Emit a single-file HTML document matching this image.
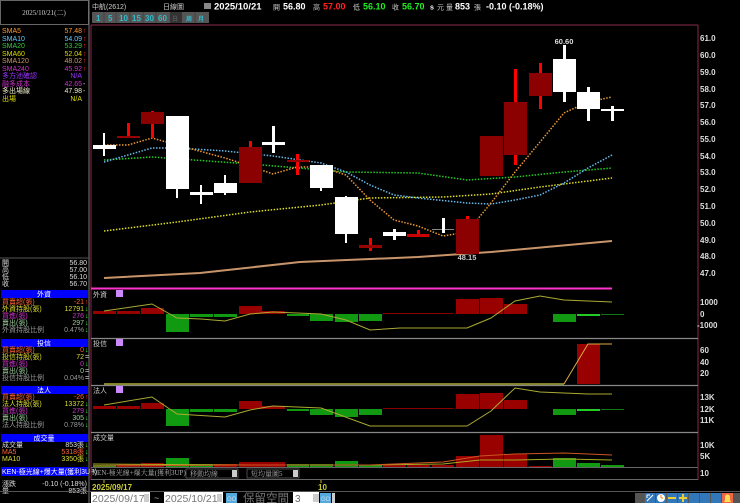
<!DOCTYPE html>
<html><head><meta charset="utf-8"><style>
html,body{margin:0;padding:0;background:#000;width:740px;height:503px;overflow:hidden}
svg{display:block}
text{font-family:"Liberation Sans","Noto Sans CJK TC",sans-serif}
.s{font-family:"Liberation Serif","Noto Serif CJK SC",serif;font-size:7px}
.ax{font-family:"Liberation Sans",sans-serif;font-size:8px;font-weight:bold;fill:#ddd}
</style></head><body>
<svg width="740" height="503" viewBox="0 0 740 503" xmlns="http://www.w3.org/2000/svg">
<rect width="740" height="503" fill="#000"/>
<!-- left panel -->
<rect x="0.5" y="0.5" width="88" height="24" fill="none" stroke="#666"/>
<text x="44" y="15" class="s" fill="#ccc" text-anchor="middle">2025/10/21(二)</text>
<line x1="89" y1="0" x2="89" y2="503" stroke="#777"/>
<g class="s">
<text x="2" y="33" fill="#ff9933">SMA5</text><text x="82" y="33" fill="#ff9933" text-anchor="end">57.48</text>
<text x="2" y="41" fill="#66ccff">SMA10</text><text x="82" y="41" fill="#66ccff" text-anchor="end">54.09</text>
<text x="2" y="48" fill="#33cc33">SMA20</text><text x="82" y="48" fill="#33cc33" text-anchor="end">53.29</text>
<text x="2" y="56" fill="#dddd00">SMA60</text><text x="82" y="56" fill="#dddd00" text-anchor="end">52.04</text>
<text x="2" y="63" fill="#cc9966">SMA120</text><text x="82" y="63" fill="#cc9966" text-anchor="end">48.02</text>
<text x="2" y="71" fill="#cc33cc">SMA240</text><text x="82" y="71" fill="#cc33cc" text-anchor="end">45.92</text>
<text x="2" y="78" fill="#9933ff">多方池確認</text><text x="82" y="78" fill="#9933ff" text-anchor="end">N/A</text>
<text x="2" y="86" fill="#cc33cc">融多成本</text><text x="82" y="86" fill="#cc33cc" text-anchor="end">42.65</text>
<text x="2" y="93" fill="#eeeecc">多出場線</text><text x="82" y="93" fill="#eeeecc" text-anchor="end">47.98</text>
<text x="2" y="101" fill="#dddd00">出場</text><text x="82" y="101" fill="#dddd00" text-anchor="end">N/A</text>
</g>
<g fill="#ff2222" font-size="7"><text x="83" y="33">↑</text><text x="83" y="41">↑</text><text x="83" y="48">↑</text><text x="83" y="56">↑</text><text x="83" y="63">↑</text><text x="83" y="71">↑</text></g>
<g fill="#ddd" font-size="7"><text x="83" y="86">-</text><text x="83" y="93">-</text></g>
<line x1="0" y1="258" x2="89" y2="258" stroke="#555"/>
<g class="s" fill="#ddd">
<text x="2" y="265">開</text><text x="87" y="265" text-anchor="end">56.80</text>
<text x="2" y="272">高</text><text x="87" y="272" text-anchor="end">57.00</text>
<text x="2" y="279">低</text><text x="87" y="279" text-anchor="end">56.10</text>
<text x="2" y="286">收</text><text x="87" y="286" text-anchor="end">56.70</text>
</g>
<!-- section boxes -->
<g class="s">
<rect x="1" y="290" width="87" height="8" fill="#0000ff"/><text x="44" y="296.5" fill="#fff" text-anchor="middle">外資</text>
<text x="2" y="304" fill="#ff6633">買賣超(張)</text><text x="84" y="304" fill="#ff6633" text-anchor="end">-21</text>
<text x="2" y="311" fill="#dddd33">外資持股(張)</text><text x="84" y="311" fill="#dddd33" text-anchor="end">12791</text>
<text x="2" y="318" fill="#cc33cc">買進(張)</text><text x="84" y="318" fill="#cc33cc" text-anchor="end">276</text>
<text x="2" y="325" fill="#99cc99">賣出(張)</text><text x="84" y="325" fill="#99cc99" text-anchor="end">297</text>
<text x="2" y="332" fill="#999">外資持股比例</text><text x="84" y="332" fill="#999" text-anchor="end">0.47%</text>
<rect x="1" y="339" width="87" height="8" fill="#0000ff"/><text x="44" y="345.5" fill="#fff" text-anchor="middle">投信</text>
<text x="2" y="352" fill="#ff6633">買賣超(張)</text><text x="84" y="352" fill="#ff6633" text-anchor="end">0</text>
<text x="2" y="359" fill="#dddd33">投信持股(張)</text><text x="84" y="359" fill="#dddd33" text-anchor="end">72</text>
<text x="2" y="366" fill="#cc33cc">買進(張)</text><text x="84" y="366" fill="#cc33cc" text-anchor="end">0</text>
<text x="2" y="373" fill="#99cc99">賣出(張)</text><text x="84" y="373" fill="#99cc99" text-anchor="end">0</text>
<text x="2" y="380" fill="#999">投信持股比例</text><text x="84" y="380" fill="#999" text-anchor="end">0.04%</text>
<rect x="1" y="386" width="87" height="8" fill="#0000ff"/><text x="44" y="392.5" fill="#fff" text-anchor="middle">法人</text>
<text x="2" y="399" fill="#ff6633">買賣超(張)</text><text x="84" y="399" fill="#ff6633" text-anchor="end">-26</text>
<text x="2" y="406" fill="#dddd33">法人持股(張)</text><text x="84" y="406" fill="#dddd33" text-anchor="end">13372</text>
<text x="2" y="413" fill="#cc33cc">買進(張)</text><text x="84" y="413" fill="#cc33cc" text-anchor="end">279</text>
<text x="2" y="420" fill="#99cc99">賣出(張)</text><text x="84" y="420" fill="#99cc99" text-anchor="end">305</text>
<text x="2" y="427" fill="#999">法人持股比例</text><text x="84" y="427" fill="#999" text-anchor="end">0.78%</text>
<rect x="1" y="434" width="87" height="8" fill="#0000ff"/><text x="44" y="440.5" fill="#fff" text-anchor="middle">成交量</text>
<text x="2" y="447" fill="#ddd">成交量</text><text x="84" y="447" fill="#ddd" text-anchor="end">853張</text>
<text x="2" y="454" fill="#ff6633">MA5</text><text x="84" y="454" fill="#ff6633" text-anchor="end">5318張</text>
<text x="2" y="461" fill="#dddd33">MA10</text><text x="84" y="461" fill="#dddd33" text-anchor="end">3350張</text>
<rect x="1" y="467" width="87" height="9" fill="#0000ff"/><text x="2" y="474" fill="#fff">KEN-極光線+爆大量(獲利3UP)</text>
<text x="2" y="486" fill="#ddd">漲跌</text><text x="87" y="486" fill="#ddd" text-anchor="end">-0.10 (-0.18%)</text>
<text x="2" y="493" fill="#ddd">量</text><text x="87" y="493" fill="#ddd" text-anchor="end">853張</text>
</g>
<g font-size="7" fill="#33ee33"><text x="85" y="311">↓</text><text x="85" y="318">↓</text><text x="85" y="325">↓</text><text x="85" y="332">↓</text><text x="85" y="352">↓</text><text x="85" y="366">↓</text><text x="85" y="406">↓</text><text x="85" y="413">↓</text><text x="85" y="420">↓</text><text x="85" y="427">↓</text><text x="85" y="447">↓</text><text x="85" y="454">↓</text><text x="85" y="461">↓</text></g>
<g font-size="7" fill="#ff2222"><text x="85" y="304">↑</text><text x="85" y="399">↑</text></g>
<g font-size="7" fill="#ddd"><text x="85" y="359">=</text><text x="85" y="373">=</text><text x="85" y="380">=</text></g>

<!-- header -->
<g class="s" fill="#ccc"><text x="92" y="9">中航(2612)</text><text x="163" y="9">日線圖</text></g>
<rect x="204" y="3" width="7" height="6" fill="#888"/>
<text x="214" y="9.5" font-size="9.5" font-weight="bold" fill="#fff" font-family="Liberation Sans">2025/10/21</text>
<g font-size="9" font-weight="bold" font-family="Liberation Sans,Noto Sans CJK TC">
<text x="273" y="9.5" fill="#ccc" font-size="7" font-weight="normal">開</text><text x="283" y="9.5" fill="#fff">56.80</text>
<text x="313" y="9.5" fill="#ccc" font-size="7" font-weight="normal">高</text><text x="323" y="9.5" fill="#ff2222">57.00</text>
<text x="353" y="9.5" fill="#ccc" font-size="7" font-weight="normal">低</text><text x="363" y="9.5" fill="#22ee22">56.10</text>
<text x="392" y="9.5" fill="#ccc" font-size="7" font-weight="normal">收</text><text x="402" y="9.5" fill="#22ee22">56.70</text>
<text x="430" y="9.5" fill="#fff" font-size="7">s</text><text x="437" y="9.5" fill="#ccc" font-size="7" font-weight="normal">元 量</text><text x="455" y="9.5" fill="#fff">853</text><text x="474" y="9.5" fill="#ccc" font-size="7" font-weight="normal">張</text>
<text x="486" y="9.5" fill="#fff">-0.10 (-0.18%)</text>
</g>
<rect x="92" y="12" width="117" height="11" fill="#555"/>
<rect x="170" y="12" width="12" height="11" fill="#333"/>
<g font-size="8" font-weight="bold" fill="#33bbcc" font-family="Liberation Sans,Noto Sans CJK TC">
<text x="96" y="21">1</text><text x="108" y="21">5</text><text x="119" y="21">10</text><text x="132" y="21">15</text><text x="145" y="21">30</text><text x="158" y="21">60</text><text x="172" y="21" fill="#555" font-size="6">日</text><text x="186" y="21" font-size="6">周</text><text x="198" y="21" font-size="6">月</text>
</g>
<g stroke="#444"><line x1="104" y1="12" x2="104" y2="23"/><line x1="116" y1="12" x2="116" y2="23"/><line x1="130" y1="12" x2="130" y2="23"/><line x1="143" y1="12" x2="143" y2="23"/><line x1="156" y1="12" x2="156" y2="23"/><line x1="195" y1="12" x2="195" y2="23"/></g>

<!-- chart frame -->
<line x1="91" y1="25" x2="698" y2="25" stroke="#8a2a4a"/>
<line x1="698" y1="25" x2="698" y2="480" stroke="#8a2a4a"/>
<line x1="91" y1="25" x2="91" y2="480" stroke="#8a2a4a"/>
<!-- y axis -->
<g class="ax" font-size="7.5">
<text x="700" y="41">61.0</text><text x="700" y="58">60.0</text><text x="700" y="75">59.0</text><text x="700" y="92">58.0</text><text x="700" y="108">57.0</text><text x="700" y="125">56.0</text><text x="700" y="142">55.0</text><text x="700" y="159">54.0</text><text x="700" y="175">53.0</text><text x="700" y="192">52.0</text><text x="700" y="209">51.0</text><text x="700" y="226">50.0</text><text x="700" y="243">49.0</text><text x="700" y="259">48.0</text><text x="700" y="276">47.0</text>
<text x="700" y="305">1000</text><text x="700" y="317">0</text><text x="697" y="328">-1000</text>
<text x="700" y="353">60</text><text x="700" y="365">40</text><text x="700" y="376">20</text>
<text x="700" y="400">13K</text><text x="700" y="412">12K</text><text x="700" y="423">11K</text>
<text x="700" y="448">10K</text><text x="700" y="459">5K</text><text x="700" y="476">10</text>
</g>

<!-- MA lines -->
<polyline fill="none" stroke="#c8956a" stroke-width="2" points="104,278 200,273 300,262 418,257 491,252 612,241"/>
<g fill="none" stroke-width="1.5" stroke-dasharray="1.5,1.5">
<polyline stroke="#dddd22" points="104,231 177,222 250,212 321,205 370,198 443,197 491,194 540,187 612,178"/>
<polyline stroke="#22cc22" points="104,160 152,157 250,164 346,172 418,173 467,180 515,177 564,172 612,168"/>
<polyline stroke="#66bbee" points="104,162 152,148 177,148 225,151 273,156 321,163 346,172 370,185 394,195 418,198 467,203 491,204 515,200 540,195 564,183 588,168 612,155"/>
<polyline stroke="#ee9933" points="104,145 128,145 152,138 177,145 225,158 250,166 273,174 297,167 321,167 346,175 370,200 394,220 418,226 443,236 467,232 491,203 515,172 540,142 564,113 588,102 612,97"/>
</g>

<!-- candles -->
<g>
<!-- 1 white cross -->
<rect x="103" y="133" width="2" height="23" fill="#fff"/><rect x="93" y="145" width="23" height="4" fill="#fff"/>
<!-- 2 red -->
<rect x="127" y="123" width="3" height="14" fill="#ff0000"/><rect x="117" y="136" width="23" height="2" fill="#990000"/>
<!-- 3 -->
<rect x="151" y="111" width="3" height="27" fill="#ff0000"/><rect x="141" y="112" width="23" height="12" fill="#8b0000"/>
<!-- 4 white -->
<rect x="176" y="116" width="2" height="82" fill="#fff"/><rect x="166" y="116" width="23" height="73" fill="#fff"/>
<!-- 5 cross -->
<rect x="200" y="185" width="2" height="19" fill="#fff"/><rect x="190" y="192" width="23" height="3" fill="#fff"/>
<!-- 6 -->
<rect x="224" y="175" width="2" height="20" fill="#fff"/><rect x="214" y="183" width="23" height="10" fill="#fff"/>
<!-- 7 red -->
<rect x="249" y="141" width="3" height="8" fill="#ff0000"/><rect x="239" y="147" width="23" height="36" fill="#8b0000"/>
<!-- 8 cross -->
<rect x="272" y="126" width="3" height="27" fill="#fff"/><rect x="262" y="142" width="23" height="3" fill="#fff"/>
<!-- 9 red -->
<rect x="296" y="154" width="3" height="21" fill="#ff0000"/><rect x="287" y="160" width="22" height="2" fill="#990000"/>
<!-- 10 white -->
<rect x="320" y="165" width="2" height="26" fill="#fff"/><rect x="310" y="165" width="23" height="23" fill="#fff"/>
<!-- 11 white -->
<rect x="345" y="196" width="2" height="47" fill="#fff"/><rect x="335" y="197" width="23" height="37" fill="#fff"/>
<!-- 12 red -->
<rect x="369" y="238" width="3" height="13" fill="#ff0000"/><rect x="359" y="245" width="23" height="3" fill="#990000"/>
<!-- 13 cross -->
<rect x="393" y="229" width="3" height="11" fill="#fff"/><rect x="383" y="232" width="23" height="4" fill="#fff"/>
<!-- 14 red -->
<rect x="417" y="230" width="3" height="6" fill="#ff0000"/><rect x="407" y="234" width="22" height="3" fill="#cc0000"/>
<!-- 15 -->
<rect x="432" y="229" width="22" height="1" fill="#888"/><rect x="442" y="218" width="3" height="15" fill="#fff"/>
<!-- 16 red -->
<rect x="466" y="216" width="3" height="4" fill="#ff0000"/><rect x="456" y="219" width="23" height="35" fill="#8b0000"/>
<!-- 17 -->
<rect x="480" y="136" width="23" height="40" fill="#8b0000"/>
<!-- 18 -->
<rect x="514" y="69" width="3" height="96" fill="#ff0000"/><rect x="504" y="102" width="23" height="53" fill="#8b0000"/>
<!-- 19 -->
<rect x="539" y="63" width="3" height="46" fill="#ff0000"/><rect x="529" y="73" width="23" height="23" fill="#8b0000"/>
<!-- 20 white -->
<rect x="563" y="45" width="3" height="57" fill="#fff"/><rect x="553" y="59" width="23" height="33" fill="#fff"/>
<!-- 21 white -->
<rect x="587" y="87" width="3" height="34" fill="#fff"/><rect x="577" y="92" width="23" height="17" fill="#fff"/>
<!-- 22 cross -->
<rect x="611" y="106" width="3" height="15" fill="#fff"/><rect x="601" y="109" width="23" height="2" fill="#fff"/>
</g>
<text x="564" y="44" font-size="7.5" font-weight="bold" fill="#ddd" text-anchor="middle">60.60</text>
<text x="467" y="260" font-size="7.5" font-weight="bold" fill="#ccc" text-anchor="middle">48.15</text>
<line x1="91" y1="288.5" x2="612" y2="288.5" stroke="#ff33cc" stroke-width="2"/>

<!-- sub panel separators -->
<g stroke="#888" stroke-width="1.2"><line x1="91" y1="338.5" x2="698" y2="338.5"/><line x1="91" y1="385.5" x2="698" y2="385.5"/><line x1="91" y1="432.5" x2="698" y2="432.5"/></g>
<g class="s" fill="#ccc"><text x="93" y="297">外資</text><text x="93" y="346">投信</text><text x="93" y="393">法人</text><text x="93" y="440">成交量</text></g>
<g fill="#cc88ff"><rect x="116" y="290" width="7" height="7"/><rect x="116" y="339" width="7" height="7"/><rect x="116" y="386" width="7" height="7"/></g>

<!-- 外資 bars -->
<g>
<rect x="93" y="311" width="23" height="3" fill="#990000"/><rect x="117" y="311" width="23" height="3" fill="#990000"/><rect x="141" y="308" width="23" height="6" fill="#990000"/>
<rect x="166" y="314" width="23" height="18" fill="#119911"/><rect x="190" y="314" width="23" height="3" fill="#119911"/><rect x="214" y="314" width="23" height="3" fill="#119911"/>
<rect x="239" y="306" width="23" height="8" fill="#990000"/><rect x="262" y="311" width="23" height="3" fill="#990000"/>
<rect x="287" y="314" width="22" height="2" fill="#119911"/><rect x="310" y="314" width="23" height="7" fill="#119911"/><rect x="335" y="314" width="23" height="8" fill="#119911"/><rect x="359" y="314" width="23" height="7" fill="#119911"/>
<rect x="383" y="313" width="70" height="1" fill="#880000"/>
<rect x="456" y="299" width="23" height="15" fill="#990000"/><rect x="480" y="298" width="23" height="16" fill="#990000"/><rect x="504" y="304" width="23" height="10" fill="#990000"/>
<rect x="553" y="314" width="23" height="8" fill="#119911"/><rect x="577" y="314" width="23" height="2" fill="#22cc22"/><rect x="601" y="314" width="23" height="1" fill="#117711"/>
</g>
<polyline fill="none" stroke="#aaaa33" points="104,311 152,304 177,318 201,319 225,321 250,314 273,312 321,314 346,320 370,330 400,328 467,328 491,318 515,301 540,296 564,300 588,301 612,302"/>
<!-- 投信 -->
<line x1="104" y1="384" x2="564" y2="384" stroke="#aaaa33" stroke-width="1.5"/>
<rect x="577" y="344" width="23" height="40" fill="#990000"/>
<polyline fill="none" stroke="#ddaa44" points="564,384 588,344 612,344"/>
<!-- 法人 -->
<g>
<rect x="93" y="406" width="23" height="3" fill="#990000"/><rect x="117" y="406" width="23" height="3" fill="#990000"/><rect x="141" y="403" width="23" height="6" fill="#990000"/>
<rect x="166" y="409" width="23" height="17" fill="#119911"/><rect x="190" y="409" width="23" height="3" fill="#119911"/><rect x="214" y="409" width="23" height="3" fill="#119911"/>
<rect x="239" y="401" width="23" height="8" fill="#990000"/><rect x="262" y="406" width="23" height="3" fill="#990000"/>
<rect x="287" y="409" width="22" height="2" fill="#119911"/><rect x="310" y="409" width="23" height="6" fill="#119911"/><rect x="335" y="409" width="23" height="8" fill="#119911"/><rect x="359" y="409" width="23" height="6" fill="#119911"/>
<rect x="383" y="408" width="70" height="1" fill="#880000"/>
<rect x="456" y="394" width="23" height="15" fill="#990000"/><rect x="480" y="393" width="23" height="16" fill="#990000"/><rect x="504" y="400" width="23" height="9" fill="#990000"/>
<rect x="553" y="409" width="23" height="6" fill="#119911"/><rect x="577" y="409" width="23" height="2" fill="#22cc22"/><rect x="601" y="409" width="23" height="1" fill="#117711"/>
</g>
<polyline fill="none" stroke="#aaaa33" points="104,405 152,397 177,414 225,417 250,410 273,406 321,408 370,426 418,426 467,426 491,411 515,388 540,392 564,393 588,394 612,394"/>
<!-- 成交量 -->
<g>
<rect x="93" y="465" width="23" height="2" fill="#119911"/><rect x="117" y="464" width="23" height="3" fill="#990000"/><rect x="141" y="463" width="23" height="4" fill="#990000"/>
<rect x="166" y="458" width="23" height="9" fill="#119911"/><rect x="190" y="464" width="23" height="3" fill="#119911"/><rect x="214" y="464" width="23" height="3" fill="#990000"/>
<rect x="239" y="462" width="23" height="5" fill="#990000"/><rect x="262" y="462" width="23" height="5" fill="#990000"/>
<rect x="287" y="464" width="22" height="3" fill="#119911"/><rect x="310" y="464" width="23" height="3" fill="#119911"/><rect x="335" y="461" width="23" height="6" fill="#119911"/><rect x="359" y="465" width="23" height="2" fill="#119911"/>
<rect x="383" y="465" width="23" height="2" fill="#990000"/><rect x="407" y="465" width="23" height="2" fill="#990000"/><rect x="432" y="465" width="22" height="2" fill="#990000"/>
<rect x="456" y="456" width="23" height="11" fill="#990000"/><rect x="480" y="435" width="23" height="32" fill="#990000"/><rect x="504" y="454" width="23" height="13" fill="#990000"/>
<rect x="529" y="466" width="23" height="1" fill="#990000"/>
<rect x="553" y="458" width="23" height="9" fill="#119911"/><rect x="577" y="463" width="23" height="4" fill="#119911"/><rect x="601" y="465" width="23" height="2" fill="#119911"/>
</g>
<polyline fill="none" stroke="#aaaa22" points="93,464 250,465 370,465 443,464 480,460 515,460 564,459 612,460"/>
<polyline fill="none" stroke="#cc5522" points="93,466 250,465 370,465 443,462 480,456 515,454 564,453 612,455"/>

<!-- bottom bar -->
<line x1="91" y1="467.5" x2="698" y2="467.5" stroke="#666"/>
<line x1="91" y1="479.5" x2="698" y2="479.5" stroke="#666"/>
<text x="92" y="475" class="s" fill="#aaa">KEN-極光線+爆大量(獲利3UP)</text>
<rect x="186" y="469" width="52" height="9" fill="#000" stroke="#777" stroke-width="0.6"/><text x="190" y="476" class="s" fill="#aaa">移動均線</text><rect x="232" y="470" width="5" height="7" fill="#ccc"/>
<rect x="247" y="469" width="52" height="9" fill="#000" stroke="#777" stroke-width="0.6"/><text x="251" y="476" class="s" fill="#aaa">短均量圖5</text><rect x="293" y="470" width="5" height="7" fill="#ccc"/>
<line x1="104" y1="480" x2="104" y2="483" stroke="#ccaa33"/><line x1="321" y1="480" x2="321" y2="483" stroke="#ccaa33"/>
<text x="92" y="490" font-size="8" font-weight="bold" fill="#cccc33">2025/09/17</text>
<text x="318" y="490" font-size="8" font-weight="bold" fill="#cccc33">10</text>
<line x1="0" y1="491.5" x2="740" y2="491.5" stroke="#555"/>
<!-- input row -->
<rect x="91" y="492" width="59" height="11" fill="#fff"/><text x="92" y="502" font-family="Liberation Serif" font-size="10.5" fill="#777">2025/09/17</text><rect x="144" y="494" width="5" height="8" fill="#ccc"/>
<text x="154" y="501" font-size="9" fill="#aaa">~</text>
<rect x="164" y="492" width="59" height="11" fill="#fff"/><text x="165" y="502" font-family="Liberation Serif" font-size="10.5" fill="#777">2025/10/21</text><rect x="217" y="494" width="5" height="8" fill="#ccc"/>
<rect x="226" y="493" width="11" height="10" fill="#55aadd"/><text x="227" y="501" font-size="6" fill="#cde">GO</text>
<text x="243" y="502" font-family="Noto Serif CJK SC,serif" font-size="11.5" fill="#777">保留空間</text>
<rect x="293" y="492" width="26" height="11" fill="#fff"/><text x="295" y="502" font-family="Liberation Serif" font-size="10" fill="#666">3</text><rect x="313" y="494" width="6" height="8" fill="#ccc"/>
<rect x="320" y="493" width="11" height="10" fill="#55aadd"/><text x="321" y="501" font-size="6" fill="#cde">GO</text>
<rect x="332" y="493" width="3" height="10" fill="#ccc"/>
<!-- toolbar icons -->
<rect x="635" y="493" width="105" height="10" fill="#555"/>
<rect x="645" y="493" width="10" height="10" fill="#3377bb"/><path d="M647 501 L653 495 M647 495 L647 498 M647 495 L650 495" stroke="#fff" fill="none"/>
<rect x="656" y="493" width="10" height="10" fill="#3377bb"/><circle cx="661" cy="498" r="4" fill="#fff"/><path d="M661 498 L661 495 M661 498 L663 498" stroke="#e80"/>
<rect x="667" y="493" width="10" height="10" fill="#3377bb"/><rect x="668" y="497" width="8" height="2" fill="#eecc33"/>
<rect x="678" y="493" width="10" height="10" fill="#3377bb"/><path d="M683 494 V502 M679 498 H687" stroke="#eecc33" stroke-width="2"/>
<rect x="689" y="493" width="10" height="10" fill="#3377bb"/><rect x="700" y="493" width="10" height="10" fill="#3377bb"/><rect x="711" y="493" width="10" height="10" fill="#3377bb"/>
<rect x="722" y="493" width="11" height="10" fill="#ee6644"/><path d="M724 502 h7 l-1 -2 v-3 a2.5 2.5 0 0 0 -5 0 v3 z" fill="#ffdd55"/>
</svg>
</body></html>
